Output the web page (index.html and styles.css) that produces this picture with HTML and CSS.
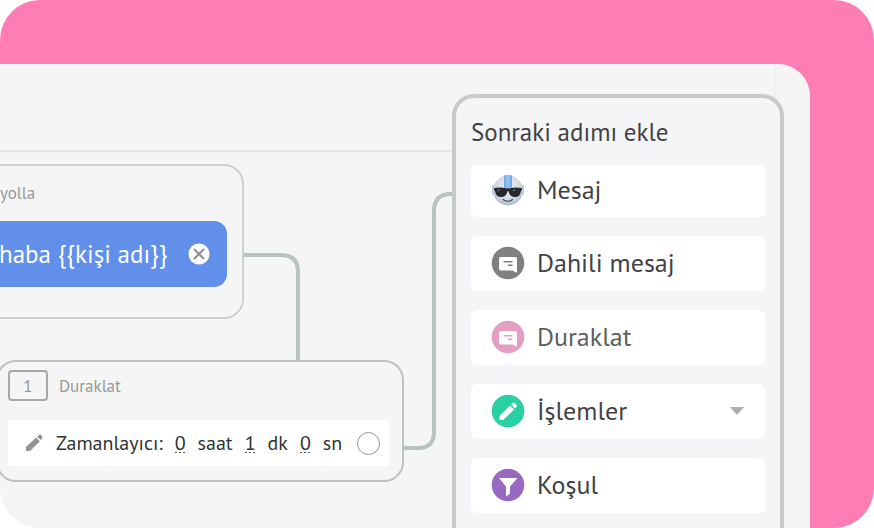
FILE: index.html
```html
<!DOCTYPE html>
<html lang="tr">
<head>
<meta charset="utf-8">
<meta name="viewport" content="width=device-width, initial-scale=1">
<title>Sonraki adımı ekle</title>
<link rel="stylesheet" href="styles.css">
</head>
<body>
<div class="frame">
  <main class="workspace">
    <div class="toolbar"></div>
    <div class="rail"></div>

    <div class="canvas">
      <svg class="wires" width="460" height="464" viewBox="0 0 460 464" fill="none" stroke="#b7c2c1" stroke-width="4" aria-hidden="true">
        <path d="M243 191H281Q298 191 298 208V297"/>
        <path d="M403 384H418Q434 384 434 368V147Q434 130 451 130H456"/>
      </svg>

      <section class="node node-message">
        <h2 class="node-title">yolla</h2>
        <div class="bubble">
          <span>haba {{kişi adı}}</span>
          <button class="remove" type="button" aria-label="Kaldır">
            <svg width="22" height="22" viewBox="0 0 22 22" aria-hidden="true"><circle cx="11" cy="11" r="10.5" fill="#fff"/><path d="M6 6l10 10M16 6L6 16" stroke="#8f9395" stroke-width="2.2"/></svg>
          </button>
        </div>
      </section>

      <section class="node node-pause">
        <header class="node-head">
          <span class="step">1</span>
          <h2 class="node-title">Duraklat</h2>
        </header>
        <div class="timer">
          <svg class="pen" width="19" height="18" viewBox="0 0 19 18" fill="#929292" aria-hidden="true"><path d="M1 17v-4L11.200 3.600l3.600 3.600L5 17zM12.200 2.700L14 1q1-.8 1.900.1l1.300 1.300q.8.900 0 1.800l-1.600 1.800z"/></svg>
          <span>Zamanlayıcı:</span>
          <button type="button" class="value">0</button>
          <span>saat</span>
          <button type="button" class="value">1</button>
          <span>dk</span>
          <button type="button" class="value">0</button>
          <span>sn</span>
          <input class="port" type="radio" name="port" aria-label="Bağlantı">
        </div>
      </section>
    </div>

    <aside class="panel">
      <h1 class="panel-title">Sonraki adımı ekle</h1>
      <div class="steps">
        <button class="item item-first" type="button">
          <svg class="icon" viewBox="0 0 34 34" aria-hidden="true">
            <defs>
              <radialGradient id="face" cx=".5" cy=".4" r=".6"><stop offset="0" stop-color="#eef0f6"/><stop offset=".7" stop-color="#d3d9e3"/><stop offset="1" stop-color="#a9b9cf"/></radialGradient>
              <linearGradient id="stripe" x1="0" y1="0" x2="1" y2="0"><stop offset="0" stop-color="#6ba6ec"/><stop offset=".5" stop-color="#9cc6f7"/><stop offset="1" stop-color="#68a2e8"/></linearGradient>
            </defs>
            <rect x="1" y="12" width="4" height="10" rx="2" fill="#b6c8e0"/><rect x="29" y="12" width="4" height="10" rx="2" fill="#b6c8e0"/>
            <circle cx="17" cy="17.500" r="15" fill="url(#face)"/>
            <path d="M13 2.500Q17 1 21 2.500V15h-8z" fill="url(#stripe)"/>
            <path d="M3 15q7-1.200 12 .3h4q5-1.500 12-.3v2q-1 .5-1.300 2.200-.8 4.800-5.700 4.800-5.200 0-6.300-5.300-.7-1.500-1.400 0Q15.200 24 10 24q-4.900 0-5.700-4.800-.3-1.700-1.300-2.200z" fill="#25282d"/>
            <path d="M6.500 18l2-1.500M22 18l2-1.500" stroke="#9ca2aa"/>
            <path d="M12 26.500q5 3.500 9.500 0" fill="none" stroke="#444b58" stroke-width="1.200" stroke-linecap="round"/>
          </svg>
          <span>Mesaj</span>
        </button>
        <button class="item" type="button">
          <svg class="icon" viewBox="0 0 34 34" aria-hidden="true"><circle cx="17" cy="17" r="16.300" fill="#808080"/><path d="M9.800 11h14.500q1.700 0 1.700 1.700V26.500q-2.500 0-4-2H9.800q-1.700 0-1.700-1.700V12.700q0-1.700 1.700-1.700z" fill="#fff"/><path d="M12.500 15.700h9M17 19.200h4.500" stroke="#808080" stroke-width="1.500"/></svg>
          <span>Dahili mesaj</span>
        </button>
        <button class="item item-muted" type="button">
          <svg class="icon" viewBox="0 0 34 34" aria-hidden="true"><circle cx="17" cy="17" r="16.300" fill="#e39fc2"/><path d="M9.800 11h14.500q1.700 0 1.700 1.700V26.500q-2.500 0-4-2H9.800q-1.700 0-1.700-1.700V12.700q0-1.700 1.700-1.700z" fill="#fff"/><path d="M12.500 15.700h9M17 19.200h4.500" stroke="#e39fc2" stroke-width="1.500"/></svg>
          <span>Duraklat</span>
        </button>
        <button class="item" type="button">
          <svg class="icon" viewBox="0 0 34 34" aria-hidden="true"><circle cx="17" cy="17" r="16.300" fill="#2acfa4"/><path d="M8.500 25.800v-3.800L19 11.500l4 4L12.500 25.800zM20 10.500l1.500-1.500q1-.8 2 .1l1.900 1.900q.8 1 0 2L24 14.500z" fill="#fff"/></svg>
          <span>İşlemler</span>
          <svg class="caret" width="14" height="8" viewBox="0 0 14 8" fill="#adadad" aria-hidden="true"><path d="M0 0h14L7 8z"/></svg>
        </button>
        <button class="item" type="button">
          <svg class="icon" viewBox="0 0 34 34" aria-hidden="true"><circle cx="17" cy="17" r="16.300" fill="#9869c0"/><path d="M8 10h18.500L19 18.500v7l-4 3v-10z" fill="#fff"/></svg>
          <span>Koşul</span>
        </button>
      </div>
    </aside>
  </main>
</div>
</body>
</html>
```

FILE: styles.css
```css
* {
  box-sizing: border-box;
}

body {
  margin: 0;
  background: #fff;
  color: #404345;
  font-family: "PT Sans", "Noto Sans", sans-serif;
}

h1,
h2 {
  margin: 0;
  font-weight: 400;
}

button {
  padding: 0;
  border: 0;
  background: none;
  color: inherit;
  font: inherit;
  cursor: pointer;
}

svg {
  display: block;
  flex: none;
}

.frame {
  display: flex;
  height: 100vh;
  padding: 64px 64px 0 0;
  overflow: hidden;
  border-radius: 40px;
  background: linear-gradient(#f5f5f5, #f5f5f5) left bottom / 80px 80px no-repeat #ff7db5;
}

.workspace {
  position: relative;
  display: grid;
  flex: 1;
  grid-template-columns: 1fr 36px;
  grid-template-rows: 88px 1fr;
  overflow: hidden;
  border-radius: 0 32px 0 0;
  background: #f5f5f5;
}

.toolbar {
  border-bottom: 2px solid #e4e5e5;
}

.rail {
  grid-row: 1 / 3;
  grid-column: 2;
  border-left: 1px solid #e9e9e9;
}

.canvas {
  position: absolute;
  inset: 0;
}

.wires {
  position: absolute;
  top: 0;
  left: 0;
}

.node {
  position: absolute;
  border: 2px solid #cdcfcf;
  border-radius: 20px;
  background: #f5f5f5;
}

.node-title {
  color: #969a9b;
  font-size: 17px;
  line-height: 24px;
}

.node-message {
  top: 100px;
  left: -24px;
  width: 268px;
  padding: 15px 15px 30px 22px;
}

.bubble {
  display: flex;
  align-items: center;
  justify-content: space-between;
  height: 66px;
  margin: 16px 0 0 -22px;
  padding: 0 17px 0 21px;
  border-radius: 13px;
  background: #628fea;
  color: #fff;
  font-size: 25px;
  line-height: 32px;
  white-space: nowrap;
}

.node-pause {
  top: 296px;
  left: -4px;
  width: 408px;
  padding: 8px 13px 14px 10px;
  border-color: #bec2c2;
}

.node-head {
  display: flex;
  align-items: center;
  gap: 11px;
}

.step {
  display: grid;
  place-items: center;
  width: 40px;
  height: 31px;
  border: 2px solid #a5a9a9;
  border-radius: 4px;
  color: #969a9b;
  font-size: 17px;
}

.timer {
  display: flex;
  align-items: center;
  gap: 12px;
  height: 46px;
  margin-top: 19px;
  padding: 0 9px 0 17px;
  border-radius: 3px;
  background: #fff;
  color: #303336;
  font-size: 20px;
  line-height: 20px;
  white-space: nowrap;
}

.value {
  background: linear-gradient(90deg, #55585a 2px, transparent 2px) left bottom / 4px 1px repeat-x;
}

.port {
  width: 23px;
  height: 23px;
  margin: 0 0 0 auto;
  border: 1px solid #8f9494;
  border-radius: 50%;
  appearance: none;
}

.panel {
  position: absolute;
  top: 30px;
  right: 26px;
  bottom: -24px;
  width: 332px;
  padding: 18px 15px;
  border: 4px solid #c8c9c9;
  border-radius: 22px;
  background: #f5f5f7;
}

.panel-title {
  font-size: 25px;
  line-height: 32px;
}

.steps {
  display: grid;
  gap: 19px;
  margin-top: 17px;
}

.item {
  display: flex;
  align-items: center;
  gap: 12px;
  height: 55px;
  padding: 0 21px 2px 20px;
  border-radius: 6px;
  background: #fff;
  font-size: 26px;
  line-height: 32px;
}

.item-first {
  height: 52px;
}

.item-muted {
  color: #5c5f60;
}

.icon {
  width: 34px;
  height: 34px;
}

.caret {
  margin-left: auto;
}
```
